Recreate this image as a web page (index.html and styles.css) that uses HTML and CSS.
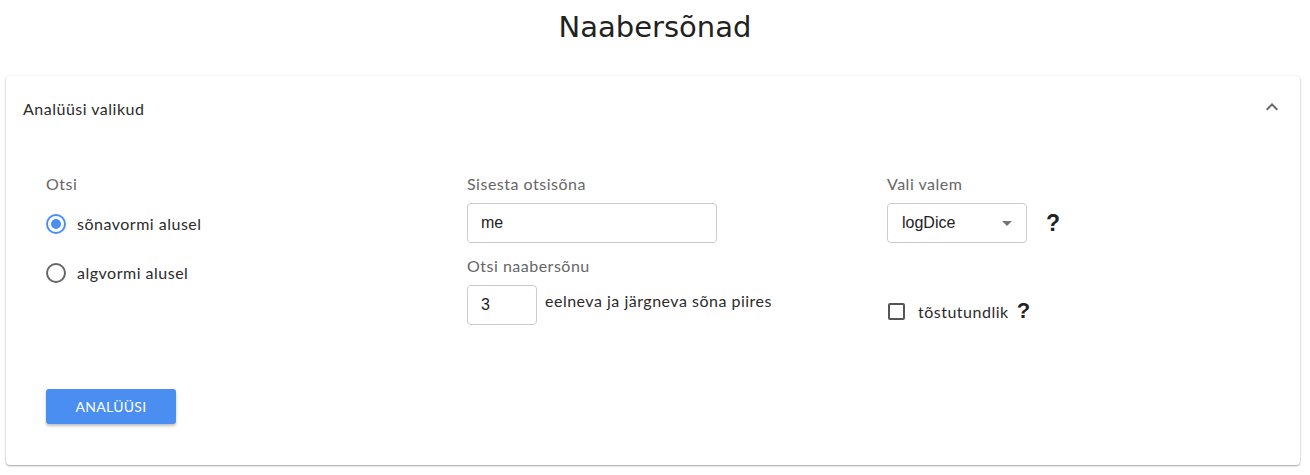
FILE: index.html
```html
<!DOCTYPE html>
<html>
<head>
<meta charset="utf-8">
<link rel="stylesheet" href="styles.css">
</head>
<body>
<h1 class="title">Naabersõnad</h1>
<section class="card">
  <div class="card-head">
    <span class="card-title">Analüüsi valikud</span>
    <svg class="chev" width="24" height="24" viewBox="0 0 24 24"><path d="M7.41 15.41 12 10.83l4.59 4.58L18 14l-6-6-6 6z" fill="#666"/></svg>
  </div>
  <div class="card-body">
    <div class="cols">
      <div class="col">
        <div class="label">Otsi</div>
        <label class="radio-row">
          <span class="radio on"><span class="dot"></span></span>
          <span class="rtext">sõnavormi alusel</span>
        </label>
        <label class="radio-row">
          <span class="radio"></span>
          <span class="rtext">algvormi alusel</span>
        </label>
      </div>
      <div class="col">
        <div class="label">Sisesta otsisõna</div>
        <div class="field wide">me</div>
        <div class="label second">Otsi naabersõnu</div>
        <div class="range-row">
          <div class="field num">3</div>
          <span class="rtext small">eelneva ja järgneva sõna piires</span>
        </div>
      </div>
      <div class="col">
        <div class="label">Vali valem</div>
        <div class="select-row">
          <div class="field select">logDice<svg class="caret" width="10" height="5" viewBox="0 0 10 5"><path d="M0 0h10L5 5z" fill="#757575"/></svg></div>
          <span class="q">?</span>
        </div>
        <div class="check-row">
          <span class="check"></span>
          <span class="rtext">tõstutundlik</span>
          <span class="q qs">?</span>
        </div>
      </div>
    </div>
    <button class="btn">ANALÜÜSI</button>
  </div>
</section>
</body>
</html>
```
FILE: styles.css
```css
html, body { margin: 0; padding: 0; background: #fff; }
body { font-family: "Lato", "Noto Sans", sans-serif; color: #333; width: 1310px; height: 475px; overflow: hidden; }
.title {
  margin: 0; padding-top: 8px; height: 68px; box-sizing: border-box;
  text-align: center; font-family: "DejaVu Sans", sans-serif; font-weight: 400;
  font-size: 29px; line-height: 38px; color: #222;
}
.card {
  margin: 8px 10px 0 6px; width: 1294px; height: 389px; box-sizing: border-box;
  border-radius: 4px; background: #fff;
  box-shadow: 0 1px 2px rgba(0,0,0,0.35), 0 0 3px rgba(0,0,0,0.06);
  display: flex; flex-direction: column;
}
.card-head {
  height: 64px; display: flex; align-items: center; justify-content: space-between;
  padding: 0 16px 0 17px;
}
.card-title { font-size: 16px; color: #2b2b2b; letter-spacing: 0.5px; }
.chev { margin-top: -2px; }
.card-body { padding: 34px 24px 0 40px; }
.cols { display: grid; grid-template-columns: 421px 420px 1fr; }
.label { font-size: 16px; color: #666; line-height: 20px; height: 20px; letter-spacing: 0.5px; }
.label.second { margin-top: 13px; }
.radio-row { display: flex; align-items: center; }
.radio-row:first-of-type { margin-top: 17px; height: 25px; margin-bottom: 24px; }
.radio-row:last-child { height: 25px; }
.radio { width: 20px; height: 20px; box-sizing: border-box; border: 2px solid #666; border-radius: 50%;
  display: flex; align-items: center; justify-content: center; margin-right: 11px; }
.radio.on { border-color: #4a8ef2; }
.radio .dot { width: 10px; height: 10px; border-radius: 50%; background: #4a8ef2; }
.rtext { font-size: 16px; color: #2b2b2b; letter-spacing: 0.5px; }
.rtext.small { margin-left: 8px; }
.field {
  border: 1px solid #ccc; border-radius: 4px; height: 40px; box-sizing: border-box;
  display: flex; align-items: center; padding: 0 13px;
  font-family: "Liberation Sans", Arial, sans-serif; font-size: 16px; color: #222;
}
.field.wide { width: 250px; margin-top: 9px; }
.field.num { width: 70px; margin-top: 9px; padding-left: 13px; }
.range-row { display: flex; align-items: center; }
.select-row { display: flex; align-items: center; margin-top: 9px; }
.field.select { width: 140px; justify-content: space-between; padding: 0 14px 0 14px; }
.caret { margin-top: 1px; }
.q { font-family: "Liberation Sans", Arial, sans-serif; font-weight: 700; font-size: 23px; color: #222; margin-left: 19px; }
.check-row { display: flex; align-items: center; margin-top: 55px; }
.check { width: 17px; height: 17px; box-sizing: border-box; border: 2px solid #555; border-radius: 2px; margin: 0 13px 0 1px; }
.q.qs { margin-left: 8px; font-size: 22px; }
.btn {
  margin-top: 64px; width: 130px; height: 35px; border: none; border-radius: 3px;
  background: #4a8ef2; color: #fff; font-family: "Lato", sans-serif; font-size: 14px;
  letter-spacing: 0.3px; box-shadow: 0 2px 3px rgba(0,0,0,0.25); padding: 0; margin-left: 0;
}
```
